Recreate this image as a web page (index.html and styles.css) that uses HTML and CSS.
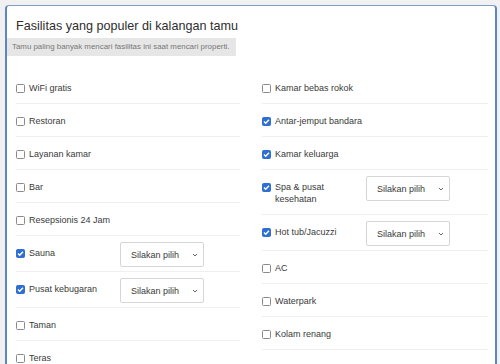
FILE: index.html
```html
<!DOCTYPE html>
<html lang="id">
<head>
    <meta charset="UTF-8">
    <meta name="viewport" content="width=device-width, initial-scale=1.0">
    <title>Fasilitas populer</title>
    <link rel="stylesheet" href="styles.css">
</head>
<body>
    <div class="card">
        <h1>Fasilitas yang populer di kalangan tamu</h1>
        <div class="hint">Tamu paling banyak mencari fasilitas ini saat mencari properti.</div>

        <div class="grid">
            <div class="col">
                <div class="row"><label class="opt"><span class="box"></span><span>WiFi gratis</span></label></div>
                <div class="row"><label class="opt"><span class="box"></span><span>Restoran</span></label></div>
                <div class="row"><label class="opt"><span class="box"></span><span>Layanan kamar</span></label></div>
                <div class="row"><label class="opt"><span class="box"></span><span>Bar</span></label></div>
                <div class="row"><label class="opt"><span class="box"></span><span>Resepsionis 24 Jam</span></label></div>
                <div class="row">
                    <label class="opt short"><span class="box on"><svg viewBox="0 0 9 9"><path d="M2 4.6l1.7 1.7L7 2.8" /></svg></span><span>Sauna</span></label>
                    <span class="pick"><select><option>Silakan pilih</option></select><svg class="chev" viewBox="0 0 6 4"><path d="M1 1l2 2 2-2" /></svg></span>
                </div>
                <div class="row">
                    <label class="opt short"><span class="box on"><svg viewBox="0 0 9 9"><path d="M2 4.6l1.7 1.7L7 2.8" /></svg></span><span>Pusat kebugaran</span></label>
                    <span class="pick"><select><option>Silakan pilih</option></select><svg class="chev" viewBox="0 0 6 4"><path d="M1 1l2 2 2-2" /></svg></span>
                </div>
                <div class="row"><label class="opt"><span class="box"></span><span>Taman</span></label></div>
                <div class="row"><label class="opt"><span class="box"></span><span>Teras</span></label></div>
            </div>

            <div class="col">
                <div class="row"><label class="opt"><span class="box"></span><span>Kamar bebas rokok</span></label></div>
                <div class="row"><label class="opt"><span class="box on"><svg viewBox="0 0 9 9"><path d="M2 4.6l1.7 1.7L7 2.8" /></svg></span><span>Antar-jemput bandara</span></label></div>
                <div class="row"><label class="opt"><span class="box on"><svg viewBox="0 0 9 9"><path d="M2 4.6l1.7 1.7L7 2.8" /></svg></span><span>Kamar keluarga</span></label></div>
                <div class="row">
                    <label class="opt short"><span class="box on"><svg viewBox="0 0 9 9"><path d="M2 4.6l1.7 1.7L7 2.8" /></svg></span><span>Spa &amp; pusat kesehatan</span></label>
                    <span class="pick"><select><option>Silakan pilih</option></select><svg class="chev" viewBox="0 0 6 4"><path d="M1 1l2 2 2-2" /></svg></span>
                </div>
                <div class="row">
                    <label class="opt short"><span class="box on"><svg viewBox="0 0 9 9"><path d="M2 4.6l1.7 1.7L7 2.8" /></svg></span><span>Hot tub/Jacuzzi</span></label>
                    <span class="pick"><select><option>Silakan pilih</option></select><svg class="chev" viewBox="0 0 6 4"><path d="M1 1l2 2 2-2" /></svg></span>
                </div>
                <div class="row"><label class="opt"><span class="box"></span><span>AC</span></label></div>
                <div class="row"><label class="opt"><span class="box"></span><span>Waterpark</span></label></div>
                <div class="row"><label class="opt"><span class="box"></span><span>Kolam renang</span></label></div>
            </div>
        </div>
    </div>
</body>
</html>
```

FILE: styles.css
```css
body {
    margin: 0;
    background-color: #f1f1f1;
    font-family: "Liberation Sans", Arial, sans-serif;
    color: #333;
}
.card {
    margin: 5px 3px 0 5px;
    background: #fff;
    border: 2px solid #5a86c2;
    border-top: 1px solid #7f9cc4;
    border-bottom: none;
    border-radius: 4px 4px 0 0;
    padding: 12px 7px 0 9px;
    height: 359px;
    box-sizing: border-box;
    overflow: hidden;
}
h1 {
    margin: 0;
    font-size: 12.6px;
    line-height: 16px;
    font-weight: normal;
    color: #2e2e2e;
}
.hint {
    display: inline-block;
    margin: 4px 0 0 -9px;
    padding: 0 6px 0 5px;
    height: 18px;
    line-height: 18px;
    background-color: #e6e6e6;
    color: #777;
    font-size: 7.9px;
}
.grid {
    display: grid;
    grid-template-columns: 224px 226px;
    column-gap: 22px;
    margin-top: 15px;
}
.row {
    display: flex;
    align-items: flex-start;
    gap: 4px;
    padding: 5px 0 4px;
    border-bottom: 1px solid #efefef;
}
.opt {
    display: flex;
    align-items: flex-start;
    gap: 4px;
    padding: 6px 0 5px;
    font-size: 9px;
    line-height: 12px;
    color: #3a3a3a;
    flex: 1;
}
.opt.short {
    flex: 0 0 100px;
}
.box {
    flex: 0 0 9px;
    width: 9px;
    height: 9px;
    margin-top: 1.5px;
    box-sizing: border-box;
    border: 1px solid #8a8a8a;
    border-radius: 1.5px;
    background: #fff;
}
.box.on {
    border-color: #2f6fd3;
    background: #2f6fd3;
    position: relative;
}
.box svg {
    position: absolute;
    left: -1px;
    top: -1px;
    width: 9px;
    height: 9px;
    fill: none;
    stroke: #fff;
    stroke-width: 1.4;
}
.pick {
    position: relative;
    margin-top: 1px;
}
.pick select {
    appearance: none;
    -webkit-appearance: none;
    width: 84px;
    height: 25px;
    margin: 0;
    padding: 0 0 0 10px;
    border: 1px solid #d6d6d6;
    border-radius: 2px;
    background: #fff;
    font-family: "Liberation Sans", Arial, sans-serif;
    font-size: 9px;
    color: #3a3a3a;
    display: block;
}
.chev {
    position: absolute;
    right: 6px;
    top: 11px;
    width: 6px;
    height: 4px;
    fill: none;
    stroke: #666;
    stroke-width: 1;
    pointer-events: none;
}
```
